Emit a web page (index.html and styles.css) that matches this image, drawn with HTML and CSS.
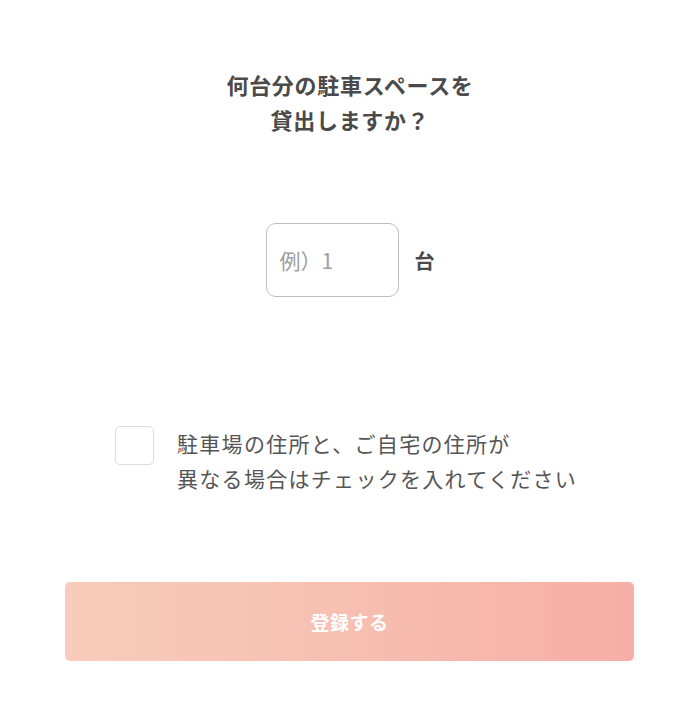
FILE: index.html
```html
<!DOCTYPE html>
<html lang="ja">
<head>
<meta charset="utf-8">
<link rel="stylesheet" href="styles.css">
</head>
<body>
<main class="page">
  <h1 class="title">何台分の駐車スペースを<br>貸出しますか？</h1>
  <div class="count-row">
    <input class="count-input" type="text" placeholder="例）1">
    <span class="unit">台</span>
  </div>
  <label class="check-row">
    <span class="checkbox"></span>
    <span class="check-text">駐車場の住所と、ご自宅の住所が<br>異なる場合はチェックを入れてください</span>
  </label>
  <div class="btn-wrap">
    <button class="submit" type="button">登録する</button>
  </div>
</main>
</body>
</html>
```
FILE: styles.css
```css
* { box-sizing: border-box; }
html, body { margin: 0; padding: 0; background: #fff; }
body {
  font-family: "Noto Sans CJK JP", "Noto Sans", sans-serif;
  color: #4a4a4a;
}
.page {
  width: 700px;
  height: 714px;
  display: flex;
  flex-direction: column;
  align-items: center;
}
.title {
  margin: 67px 0 0;
  font-size: 22px;
  line-height: 35px;
  font-weight: 700;
  letter-spacing: 0.7px;
  text-align: center;
  color: #4a4a4a;
}
.count-row {
  margin-top: 86px;
  display: flex;
  align-items: center;
  gap: 16px;
}
.count-input {
  width: 133px;
  height: 74px;
  border: 1.5px solid #bdbdbd;
  border-radius: 10px;
  padding: 0 13px;
  font-family: inherit;
  font-size: 21px;
  color: #4a4a4a;
  outline: none;
  background: #fff;
}
.count-input::placeholder { color: #9e9e9e; }
.unit {
  font-size: 20px;
  font-weight: 700;
  color: #4a4a4a;
}
.check-row {
  margin-top: 129px;
  align-self: flex-start;
  margin-left: 115px;
  display: flex;
  align-items: flex-start;
  gap: 23px;
}
.checkbox {
  width: 39px;
  height: 39px;
  border: 1.5px solid #dcdcdc;
  border-radius: 5px;
  flex: none;
}
.check-text {
  font-size: 21px;
  line-height: 35px;
  letter-spacing: 1.3px;
  color: #555;
}
.btn-wrap {
  margin-top: 86px;
  width: 100%;
  padding: 0 66px 0 65px;
}
.submit {
  width: 100%;
  height: 79px;
  border: none;
  border-radius: 5px;
  background: linear-gradient(90deg, #f8cbbb 0%, #f7c2b3 40%, #f6aea6 100%);
  color: #fff;
  font-family: inherit;
  font-size: 19px;
  font-weight: 700;
  letter-spacing: 0.5px;
}
```
